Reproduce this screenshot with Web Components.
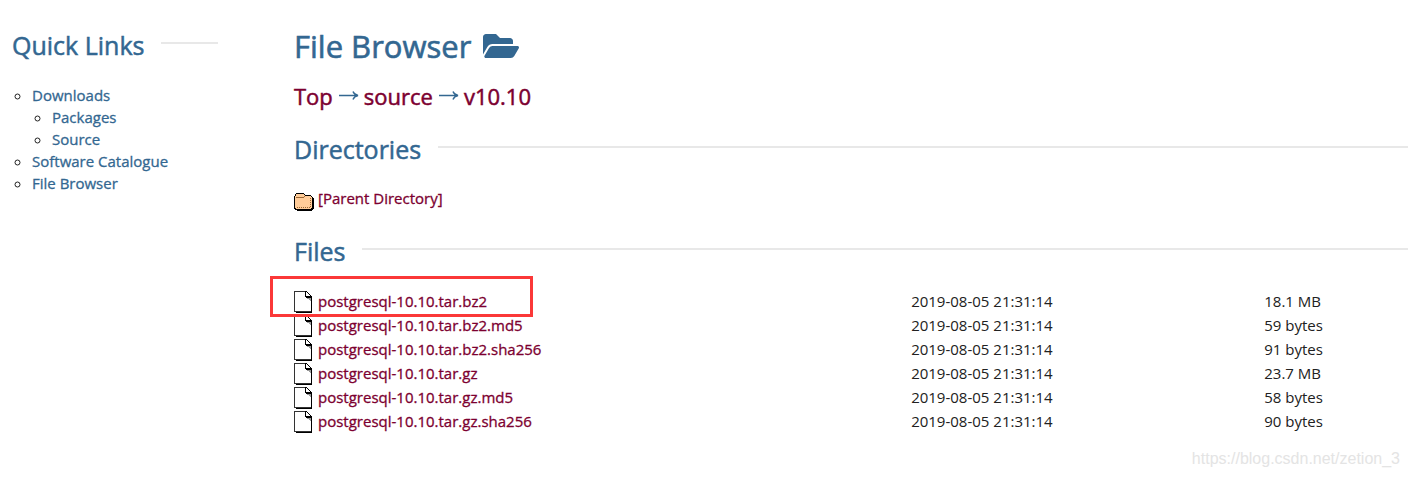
<!DOCTYPE html>
<html lang="en">
<head>
<meta charset="utf-8">
<title>File Browser</title>
<style>
  body {
    margin: 0;
    font-family: "Open Sans", sans-serif;
    font-size: 15px;
    color: #212121;
    background: #fff;
    --blue: #336791;
    --wine: #7c0030;
    --rule: #e8e8e8;
  }
</style>
</head>
<body>
<pg-page>
  <pg-sidebar slot="side"></pg-sidebar>
  <pg-breadcrumb></pg-breadcrumb>
  <pg-heading>Directories</pg-heading>
  <pg-parent></pg-parent>
  <pg-heading>Files</pg-heading>
  <pg-files></pg-files>
</pg-page>

<script>
const FILE_ICON = `
  <svg viewBox="0 0 20 22" width="20" height="22" shape-rendering="crispEdges" aria-hidden="true">
    <path fill="#000" d="M2 21h16v1H2zM17 6h1v16h-1z"/>
    <path fill="#fff" d="M1 1h11v5h5v14H1z"/>
    <path fill="#333" d="M0 0h12v1H0zM0 0h1v21H0zM0 20h17v1H0z"/>
    <path fill="#000" d="M11 0h1v5h6v2h-6v-1h-1zM12 0h1v1h-1zM13 1h1v1h-1zM14 2h1v1h-1zM15 3h1v1h-1zM16 4h1v1h-1z"/>
    <path fill="#999" d="M13 7h4v1h-4zM15 8h2v1h-2zM16 9h1v1h-1z"/>
  </svg>`;

const FOLDER_ICON = `
  <svg viewBox="0 0 20 18" width="20" height="18" shape-rendering="crispEdges" aria-hidden="true">
    <path fill="#000" d="M2 0h8v1h1v1h6v1h1v1h1v1h1v11h-1v1h-1v1H3v-1H1v-1H0V3h1V1h1z"/>
    <path fill="#fc9" d="M2 1h8v1h1v1h6v1h1v11h-1v1H2v-1H1V3h1z"/>
    <path fill="#963" d="M2 4h8v1H2zM10 3h1v1h-1z"/>
    <path fill="#963" d="M3 14h1v1H3zM5 14h1v1H5zM7 14h1v1H7zM9 14h1v1H9zM11 14h1v1h-1zM13 14h1v1h-1zM15 14h1v1h-1zM16 13h1v1h-1zM16 11h1v1h-1zM16 9h1v1h-1zM16 7h1v1h-1zM16 5h1v1h-1z"/>
  </svg>`;

// Page frame: links on the left, everything else in the main column
class PgPage extends HTMLElement {
  constructor() {
    super();
    this.attachShadow({ mode: 'open' }).innerHTML = `
      <style>
        :host { display: block; }
        .columns { display: grid; grid-template-columns: 206px minmax(0, 1fr); column-gap: 76px; padding: 24px 0 0 12px; }
        h1 { display: flex; align-items: center; gap: 12px; margin: 0; font-size: 31px; line-height: 44px; font-weight: 400; color: var(--blue); -webkit-text-stroke: 0.6px var(--blue); }
        h1 svg { width: 36px; height: 32px; fill: currentColor; stroke: none; }
        footer { padding: 16px 8px 0 0; text-align: right; font: 16px/20px "Liberation Sans", sans-serif; color: #e4e4e4; }
      </style>
      <div class="columns">
        <slot name="side"></slot>
        <main>
          <h1>File Browser
            <svg viewBox="0 0 576 512" aria-hidden="true"><path d="M572.694 292.093L500.27 416.248A63.997 63.997 0 0 1 444.989 448H45.025c-18.523 0-30.064-20.093-20.731-36.093l72.424-124.155A64 64 0 0 1 152 256h399.964c18.523 0 30.064 20.093 20.73 36.093zM152 224h328v-48c0-26.51-21.49-48-48-48H272l-64-64H48C21.49 64 0 85.49 0 112v278.046l69.077-118.418C86.214 242.25 117.989 224 152 224z"/></svg>
          </h1>
          <slot></slot>
        </main>
      </div>
      <footer>https://blog.csdn.net/zetion_3</footer>`;
  }
}

// Section title followed by a thin rule
class PgHeading extends HTMLElement {
  constructor() {
    super();
    this.attachShadow({ mode: 'open' }).innerHTML = `
      <style>
        :host { display: block; }
        h2 { display: flex; align-items: center; gap: 17px; margin: 0; font-size: 25px; line-height: 34px; font-weight: 400; color: var(--blue); -webkit-text-stroke: 0.5px var(--blue); }
        h2::after { content: ""; flex: 1; height: 2px; margin-bottom: 4px; background: var(--rule); }
      </style>
      <h2><slot></slot></h2>`;
  }
}

class PgSidebar extends HTMLElement {
  constructor() {
    super();
    this.attachShadow({ mode: 'open' }).innerHTML = `
      <style>
        :host { display: block; padding-top: 4px; }
        ul { margin: 0; padding-left: 20px; list-style: circle; line-height: 22px; }
        nav > ul { margin-top: 22px; }
        a { color: var(--blue); text-decoration: none; -webkit-text-stroke: 0.3px var(--blue); }
      </style>
      <nav>
        <pg-heading>Quick Links</pg-heading>
        <ul>
          <li><a href="#downloads">Downloads</a>
            <ul>
              <li><a href="#packages">Packages</a></li>
              <li><a href="#source">Source</a></li>
            </ul>
          </li>
          <li><a href="#catalogue">Software Catalogue</a></li>
          <li><a href="#browser">File Browser</a></li>
        </ul>
      </nav>`;
  }
}

class PgBreadcrumb extends HTMLElement {
  constructor() {
    super();
    this.attachShadow({ mode: 'open' }).innerHTML = `
      <style>
        :host { display: block; margin: 13px 0 21px; }
        nav { display: flex; align-items: center; gap: 5px; font-size: 22px; line-height: 30px; }
        a { color: var(--wine); text-decoration: none; -webkit-text-stroke: 0.5px var(--wine); }
        svg { fill: none; stroke: var(--blue); stroke-width: 1.4; }
      </style>
      <nav aria-label="Path"></nav>`;
  }
  connectedCallback() {
    const arrow = '<svg width="21" height="12" viewBox="0 0 21 12" aria-hidden="true"><path d="M1 5.5h19M15 1.5q1 3 5 4q-4 1-5 4"/></svg>';
    this.shadowRoot.querySelector('nav').innerHTML = ['Top', 'source', 'v10.10']
      .map(name => `<a href="#${name}">${name}</a>`)
      .join(arrow);
  }
}

class PgParent extends HTMLElement {
  constructor() {
    super();
    this.attachShadow({ mode: 'open' }).innerHTML = `
      <style>
        :host { display: block; margin: 20px 0 23px; }
        a { display: flex; align-items: flex-start; gap: 4px; line-height: 24px; color: var(--wine); text-decoration: none; -webkit-text-stroke: 0.3px var(--wine); }
        svg { margin-top: 7px; }
      </style>
      <a href="#parent">${FOLDER_ICON}[Parent Directory]</a>`;
  }
}

class PgFiles extends HTMLElement {
  constructor() {
    super();
    this.attachShadow({ mode: 'open' }).innerHTML = `
      <style>
        :host { display: block; margin-top: 21px; }
        table { width: 100%; table-layout: fixed; border-collapse: collapse; }
        col.name { width: 55.4%; }
        col.date { width: 31.7%; }
        td { padding: 0; line-height: 24px; vertical-align: top; }
        td:first-child { position: relative; }
        td:not(:first-child) { padding-top: 1px; line-height: 23px; }
        a { display: flex; gap: 4px; height: 24px; color: var(--wine); text-decoration: none; -webkit-text-stroke: 0.3px var(--wine); }
        svg { flex: none; margin-top: 2px; }
        .mark { position: absolute; z-index: 1; left: -24px; top: -13px; width: 257px; height: 35px; border: 3px solid #fb3838; }
      </style>
      <table>
        <colgroup><col class="name"><col class="date"><col></colgroup>
        <tbody></tbody>
      </table>`;
  }
  connectedCallback() {
    const files = [
      ['postgresql-10.10.tar.bz2', '18.1 MB'],
      ['postgresql-10.10.tar.bz2.md5', '59 bytes'],
      ['postgresql-10.10.tar.bz2.sha256', '91 bytes'],
      ['postgresql-10.10.tar.gz', '23.7 MB'],
      ['postgresql-10.10.tar.gz.md5', '58 bytes'],
      ['postgresql-10.10.tar.gz.sha256', '90 bytes']
    ];
    this.shadowRoot.querySelector('tbody').innerHTML = files.map(([name, size], i) => `
      <tr>
        <td><a href="#${name}">${FILE_ICON}${name}</a>${i === 0 ? '<div class="mark"></div>' : ''}</td>
        <td>2019-08-05 21:31:14</td>
        <td>${size}</td>
      </tr>`).join('');
  }
}

customElements.define('pg-page', PgPage);
customElements.define('pg-heading', PgHeading);
customElements.define('pg-sidebar', PgSidebar);
customElements.define('pg-breadcrumb', PgBreadcrumb);
customElements.define('pg-parent', PgParent);
customElements.define('pg-files', PgFiles);
</script>
</body>
</html>
